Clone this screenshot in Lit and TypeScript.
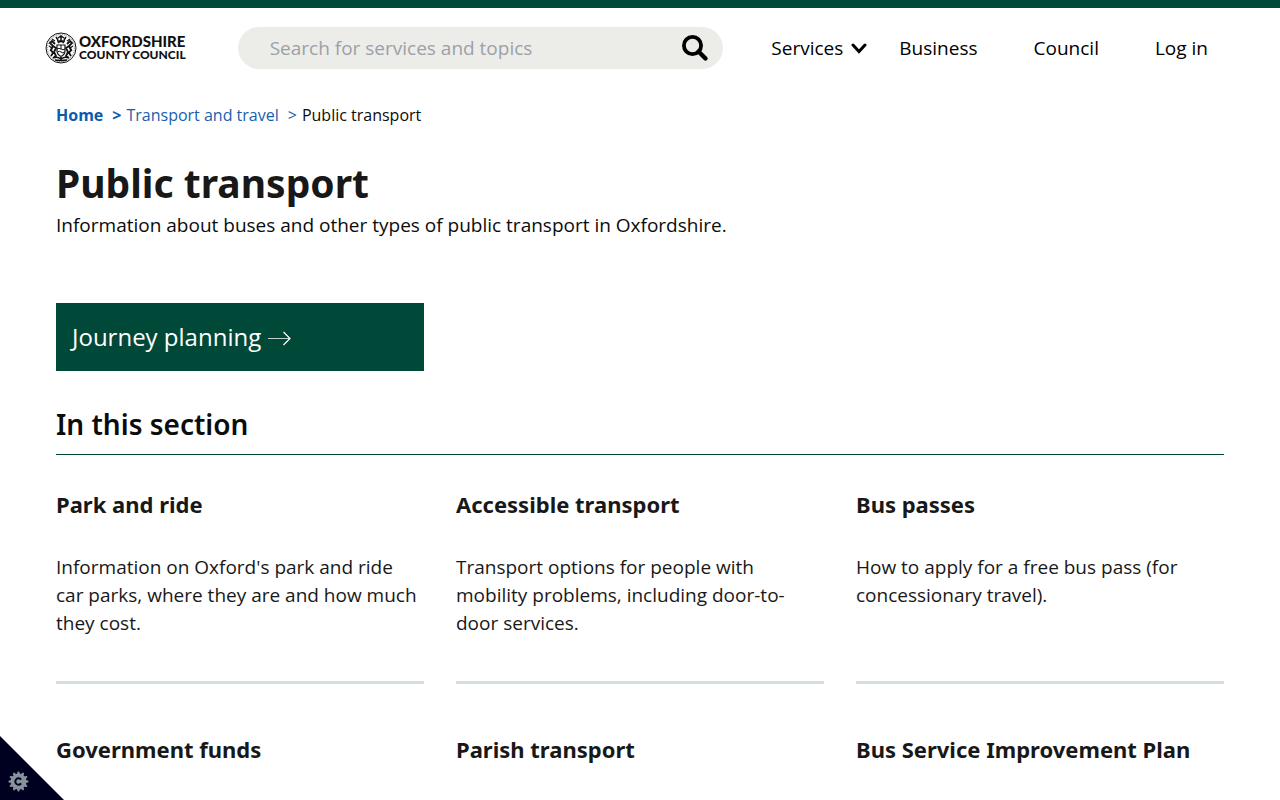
import { LitElement, html, css, svg, nothing } from "lit";
import { customElement, property } from "lit/decorators.js";

interface Topic {
  title: string;
  text?: string;
}

const topics: Topic[] = [
  {
    title: "Park and ride",
    text: "Information on Oxford's park and ride car parks, where they are and how much they cost.",
  },
  {
    title: "Accessible transport",
    text: "Transport options for people with mobility problems, including door-to-door services.",
  },
  { title: "Bus passes", text: "How to apply for a free bus pass (for concessionary travel)." },
  { title: "Government funds" },
  { title: "Parish transport" },
  { title: "Bus Service Improvement Plan" },
];

// Twelve-toothed cog outline, centred on the origin.
const cogPoints = Array.from({ length: 48 }, (_, i) => {
  const radius = i % 4 === 0 || i % 4 === 1 ? 10 : 7.8;
  const angle = ((i - 0.5) * Math.PI) / 24;
  return `${(radius * Math.cos(angle)).toFixed(2)},${(radius * Math.sin(angle)).toFixed(2)}`;
}).join(" ");

@customElement("council-crest")
export class CouncilCrest extends LitElement {
  static styles = css`
    :host {
      display: block;
      width: 32px;
      height: 32px;
    }
    svg {
      display: block;
    }
  `;

  render() {
    return html`<svg width="32" height="32" viewBox="0 0 32 32" fill="none" stroke="#111" aria-hidden="true">
      <circle cx="16" cy="16" r="15" stroke-width="1" />
      <circle cx="16" cy="16" r="13.4" stroke-width="1" stroke-dasharray="1 1" stroke="#777" />
      <path d="M12 13h8v6c0 3-2 4.500-4 5.500-2-1-4-2.500-4-5.500z" stroke-width="1.2" />
      <path d="M12 17q2-1.500 4 0t4 0M12.500 20q2-1.500 3.500 0t3.500 0M16 13v4" />
      <path d="M13 11q3-3 6 0M12 9h8M16 9V4M13 6l3-2 3 2M13 8l-2-3M19 8l2-3" stroke-width="1.5" />
      <path
        d="M10 12l-3-3-2 2 3 3-2 4 2 3-2 3M8 14l3 2-2 4 2 4-3 2M22 12l3-3 2 2-3 3 2 4-2 3 2 3M24 14l-3 2 2 4-2 4 3 2"
        stroke-width="1.8"
      />
      <path d="M4 14l3 2-2 3M28 14l-3 2 2 3M7 7l3 2M25 7l-3 2" stroke-width="1.2" />
      <path d="M9 26q3-2 7 1 4-3 7-1M10 28q6 1 12 0M16 25v4" stroke-width="1.5" />
    </svg>`;
  }
}

@customElement("topic-card")
export class TopicCard extends LitElement {
  @property({ attribute: false }) topic!: Topic;

  static styles = css`
    :host {
      display: flex;
      flex-direction: column;
      color: #181818;
    }
    .title {
      margin: 0;
      font: 700 22px/32px "Noto Sans", sans-serif;
    }
    .link {
      color: inherit;
      text-decoration: none;
    }
    .text {
      margin: 33px 0 0;
      padding-bottom: 44px;
      font-size: 19px;
      line-height: 28px;
    }
    .rule {
      margin-top: auto;
      height: 3px;
      background: #d3dfdb;
    }
  `;

  render() {
    return html`<h3 class="title"><a class="link" href="#">${this.topic.title}</a></h3>
      ${this.topic.text
        ? html`<p class="text">${this.topic.text}</p>
            <div class="rule"></div>`
        : nothing}`;
  }
}

@customElement("app-root")
export class AppRoot extends LitElement {
  static styles = css`
    :host {
      display: block;
      min-height: 100vh;
      box-sizing: border-box;
      border-top: 8px solid #004838;
      background: #fff;
      color: #0b0c0c;
      font: 19px/29px "Open Sans", sans-serif;
    }
    a {
      text-decoration: none;
    }
    .header {
      display: flex;
      align-items: center;
      padding: 19px 72px 0 45px;
    }
    .logo {
      display: flex;
      align-items: center;
      gap: 2px;
      color: #111;
      font-family: Lato, sans-serif;
      font-weight: 900;
      white-space: nowrap;
    }
    .logo-name {
      display: block;
      font-size: 15px;
      line-height: 14px;
    }
    .logo-kind {
      display: block;
      font-size: 12px;
      line-height: 14px;
    }
    .search {
      display: flex;
      align-items: center;
      flex: 1;
      min-width: 0;
      height: 42px;
      box-sizing: border-box;
      margin: 0 48px 0 52px;
      padding: 0 14px 0 32px;
      border-radius: 21px;
      background: #ecede8;
    }
    .search-box {
      flex: 1;
      min-width: 0;
      padding: 0;
      border: 0;
      outline: 0;
      background: transparent;
      color: #0b0c0c;
      font: inherit;
    }
    .search-box::placeholder {
      color: #9ca0a8;
      opacity: 1;
    }
    .search-button {
      display: flex;
      padding: 0;
      border: 0;
      background: transparent;
      color: #000;
    }
    .nav {
      display: flex;
      gap: 56px;
    }
    .nav-pair {
      display: flex;
      gap: 32px;
    }
    .nav-link {
      display: flex;
      align-items: center;
      gap: 8px;
      padding: 0;
      border: 0;
      background: transparent;
      color: #000;
      font: inherit;
      white-space: nowrap;
    }
    .page {
      padding: 34px 56px 0;
    }
    .crumbs {
      display: flex;
      gap: 5px;
      margin: 0;
      padding: 0;
      list-style: none;
      font-size: 16px;
      line-height: 24px;
      color: #0b0c0c;
    }
    .crumb {
      color: #1860ae;
    }
    .crumb-home {
      color: #0b5cae;
      font-weight: 700;
    }
    .crumb-mark {
      margin-left: 9px;
    }
    .page-title {
      margin: 28px 0 0;
      color: #181818;
      font: 700 39px/56px "Noto Sans", sans-serif;
    }
    .intro {
      margin: 0;
    }
    .action {
      display: flex;
      align-items: center;
      gap: 7px;
      box-sizing: border-box;
      width: calc((100% - 64px) / 3);
      min-height: 68px;
      margin-top: 63px;
      padding: 0 16px;
      background: #004838;
      color: #fff;
      font-size: 24px;
      line-height: 36px;
    }
    .section-title {
      margin: 32px 0 0;
      padding-bottom: 9px;
      border-bottom: 1px solid #004838;
      font: 600 28px/42px "Noto Sans", sans-serif;
    }
    .topics {
      display: grid;
      grid-template-columns: repeat(3, minmax(0, 1fr));
      gap: 49px 32px;
      padding-top: 33px;
    }
    .privacy {
      position: fixed;
      left: 0;
      bottom: 0;
      width: 64px;
      height: 64px;
      padding: 0;
      border: 0;
      background: #000021;
      clip-path: polygon(0 0, 100% 100%, 0 100%);
    }
    .cog {
      position: absolute;
      left: 8px;
      bottom: 8px;
    }
  `;

  private crumb(label: string, home = false) {
    return html`<li>
      <a class="crumb ${home ? "crumb-home" : ""}" href="#">${label}<span class="crumb-mark">&gt;</span></a>
    </li>`;
  }

  render() {
    return html`
      <header class="header">
        <a class="logo" href="#">
          <council-crest></council-crest>
          <span><span class="logo-name">OXFORDSHIRE</span><span class="logo-kind">COUNTY COUNCIL</span></span>
        </a>
        <form class="search" role="search">
          <input class="search-box" type="search" aria-label="Search" placeholder="Search for services and topics" />
          <button class="search-button" type="button" aria-label="Submit search">
            <svg width="28" height="28" viewBox="0 0 28 28" fill="none" stroke="currentColor">
              <circle cx="11.500" cy="11.500" r="8.600" stroke-width="3.800" />
              <path d="M17.500 17.500l7 7" stroke-width="4.400" stroke-linecap="round" />
            </svg>
          </button>
        </form>
        <nav class="nav" aria-label="Main">
          <div class="nav-pair">
            <button class="nav-link" type="button">
              Services
              <svg width="16" height="12" viewBox="0 0 16 12" fill="none" stroke="currentColor" aria-hidden="true">
                <path d="M2 3L8 9.500 14 3" stroke-width="3" stroke-linecap="round" />
              </svg>
            </button>
            <a class="nav-link" href="#">Business</a>
          </div>
          <a class="nav-link" href="#">Council</a>
          <a class="nav-link" href="#">Log in</a>
        </nav>
      </header>
      <main class="page">
        <nav aria-label="Breadcrumb">
          <ol class="crumbs">
            ${this.crumb("Home", true)}${this.crumb("Transport and travel")}
            <li>Public transport</li>
          </ol>
        </nav>
        <h1 class="page-title">Public transport</h1>
        <p class="intro">Information about buses and other types of public transport in Oxfordshire.</p>
        <a class="action" href="#">
          Journey planning
          <svg width="24" height="18" viewBox="0 0 24 18" fill="none" stroke="currentColor" aria-hidden="true">
            <path d="M0 10.500h22" stroke-width="1" opacity=".75" />
            <path d="M15.500 4L22 10.500 15.500 17" stroke-width="1.200" />
          </svg>
        </a>
        <h2 class="section-title">In this section</h2>
        <div class="topics">${topics.map((topic) => html`<topic-card .topic=${topic}></topic-card>`)}</div>
      </main>
      <button class="privacy" type="button" aria-label="Cookie preferences">
        <svg class="cog" width="21" height="21" viewBox="-10.500 -10.500 21 21">
          ${svg`<polygon points=${cogPoints} fill="#86929c" />`}
          <path d="M2.600 -1.900A3.200 3.200 0 1 0 2.600 1.900" fill="none" stroke="#000021" stroke-width="2" />
        </svg>
      </button>
    `;
  }
}
